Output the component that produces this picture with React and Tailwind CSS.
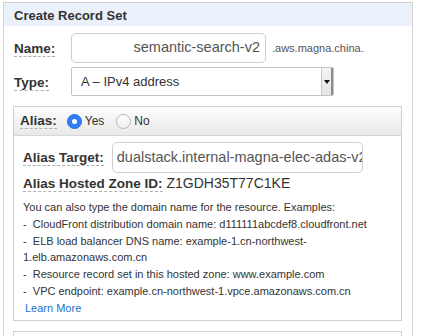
import React from 'react';

const font = "font-['Liberation_Sans',Arial,sans-serif]";

function Label({ children, className = '' }) {
  return (
    <span
      className={`inline-block text-[13.5px] font-bold leading-[15px] text-[#333] border-b border-dashed border-[#b0b0b0] ${className}`}
    >
      {children}
    </span>
  );
}

function Radio({ checked, label }) {
  return (
    <label className="flex items-center gap-[3px]">
      {checked ? (
        <span className="w-[15px] h-[15px] rounded-full bg-[#2e7df6] border border-[#2a6fdc] flex items-center justify-center">
          <span className="w-[5px] h-[5px] rounded-full bg-white" />
        </span>
      ) : (
        <span className="w-[15px] h-[15px] rounded-full bg-gradient-to-b from-white to-[#f0f0f0] border border-[#b5b5b5]" />
      )}
      <span className="text-[12px] text-[#333]">{label}</span>
    </label>
  );
}

export default function App() {
  const examples = [
    'CloudFront distribution domain name: d111111abcdef8.cloudfront.net',
    'ELB load balancer DNS name: example-1.cn-northwest-1.elb.amazonaws.com.cn',
    'Resource record set in this hosted zone: www.example.com',
    'VPC endpoint: example.cn-northwest-1.vpce.amazonaws.com.cn',
  ];

  return (
    <div className={`w-[432px] h-[336px] overflow-hidden bg-white pt-[2px] pl-[3px] ${font}`}>
      <div className="w-[410px] h-[400px] border border-[#d3d3d3] bg-white">
        {/* Header */}
        <div className="h-[23px] pt-[5px] pl-[10px] bg-[#eaf1fb]">
          <span className="block text-[13px] leading-[16px] font-bold text-[#333]">Create Record Set</span>
        </div>

        {/* Name */}
        <div className="flex items-center mt-[7px] pl-[10px]">
          <div className="w-[57px]">
            <Label>Name:</Label>
          </div>
          <div className="w-[195px] h-[30px] rounded-[5px] border border-[#cfcfcf] flex items-center justify-end pr-[5px] text-[14.5px] text-[#555]">
            semantic-search-v2
          </div>
          <span className="ml-[6px] text-[11px] text-[#555]">.aws.magna.china.</span>
        </div>

        {/* Type */}
        <div className="flex items-center mt-[4px] pl-[10px]">
          <div className="w-[57px]">
            <Label>Type:</Label>
          </div>
          <div className="w-[263px] h-[29px] rounded-[2px] border border-[#c4c4c4] flex">
            <div className="flex-1 flex items-center pl-[9px] text-[13px] text-[#333]">A – IPv4 address</div>
            <div className="w-[12px] border-l border-[#c8c8c8] border-r-2 border-r-[#8c8c8c] bg-gradient-to-b from-[#f4f4f4] to-[#e4e4e4] flex items-center justify-center">
              <svg width="6" height="4" viewBox="0 0 6 4">
                <path d="M0 0h6L3 4z" fill="#111" />
              </svg>
            </div>
          </div>
        </div>

        {/* Alias box */}
        <div className="ml-[9px] mt-[10px] w-[389px] border border-[#d0d0d0]">
          <div className="h-[29px] flex items-center pl-[6px] bg-gradient-to-b from-[#fdfdfd] to-[#e9e9e9] border-b border-[#d6d6d6]">
            <Label>Alias:</Label>
            <div className="flex items-center gap-[12px] ml-[10px]">
              <Radio checked label="Yes" />
              <Radio label="No" />
            </div>
          </div>

          <div className="pl-[9px] pr-[8px] pt-[6px] pb-[3px]">
            <div className="flex items-center gap-[8px]">
              <Label>Alias Target:</Label>
              <div className="w-[251px] h-[31px] rounded-[5px] border border-[#cfcfcf] flex items-center pl-[4px] overflow-hidden whitespace-nowrap text-[14.5px] text-[#555]">
                dualstack.internal-magna-elec-adas-v2
              </div>
            </div>

            <div className="flex items-baseline">
              <Label>Alias Hosted Zone ID:</Label>
              <span className="ml-[4px] text-[14px] text-[#333]">Z1GDH35T77C1KE</span>
            </div>

            <div className="mt-[5px] text-[11px] leading-[16.8px] text-[#333]">
              <p>You can also type the domain name for the resource. Examples:</p>
              {examples.map((e) => (
                <p key={e}>-{'\u00a0 '}{e}</p>
              ))}
              <a className="ml-[2px] text-[#1f6fc4]">Learn More</a>
            </div>
          </div>
        </div>

        <div className="ml-[9px] mt-[10px] w-[389px] h-[40px] border border-[#d0d0d0]" />
      </div>
    </div>
  );
}
